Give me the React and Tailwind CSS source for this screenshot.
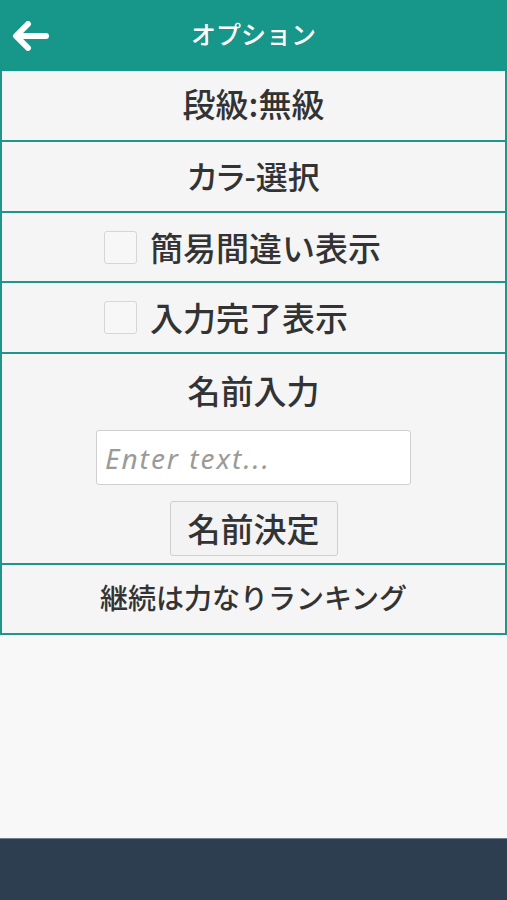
import React, { useState } from "react";

const jp = { fontFamily: '"Noto Sans CJK JP", "Noto Sans", sans-serif' };

function Row({ children, className = "" }) {
  return (
    <div className={`flex items-center justify-center border-b-2 border-[#1f9689] bg-[#f5f5f5] ${className}`}>
      {children}
    </div>
  );
}

function Check({ checked, onClick, label }) {
  return (
    <button onClick={onClick} className="flex items-center gap-[13px]">
      <span className="flex h-[33px] w-[33px] items-center justify-center rounded-[3px] border border-[#d6d6d6] bg-[#f7f7f7] text-[20px] text-[#333]">
        {checked ? "✓" : ""}
      </span>
      <span className="text-[33px] font-medium leading-none text-[#333]">{label}</span>
    </button>
  );
}

export default function App() {
  const [mistake, setMistake] = useState(false);
  const [done, setDone] = useState(false);
  const [name, setName] = useState("");

  return (
    <div className="flex h-[900px] w-full flex-col bg-[#f8f8f8]" style={jp}>
      {/* header */}
      <div className="relative flex h-[71px] shrink-0 items-center justify-center bg-[#17968a]">
        <button className="absolute left-[11px] top-[21px]">
          <svg width="38" height="30" viewBox="0 0 38 30">
            <path d="M17 3 L5 15 L17 27 M6 15 H35" fill="none" stroke="#fff" strokeWidth="6" strokeLinecap="round" strokeLinejoin="round" />
          </svg>
        </button>
        <span className="-mt-[3px] text-[25px] font-medium text-white">オプション</span>
      </div>

      {/* options */}
      <div className="flex flex-col border-x-2 border-[#1f9689]">
        <Row className="h-[71px] border-t border-t-[#e8f4f2]">
          <span className="-mt-[4px] text-[33px] font-medium text-[#333]">段級:無級</span>
        </Row>
        <Row className="h-[71px]">
          <span className="-mt-[4px] text-[32px] font-medium text-[#333]" style={{ fontFeatureSettings: '"palt"' }}>
            カラ-選択
          </span>
        </Row>
        <Row className="h-[70px] justify-start pl-[102px]">
          <Check checked={mistake} onClick={() => setMistake(!mistake)} label="簡易間違い表示" />
        </Row>
        <Row className="h-[71px] justify-start pl-[102px]">
          <Check checked={done} onClick={() => setDone(!done)} label="入力完了表示" />
        </Row>
        <Row className="h-[211px] flex-col justify-start pt-[20px]">
          <span className="text-[33px] font-medium leading-none text-[#333]">名前入力</span>
          <input
            value={name}
            onChange={(e) => setName(e.target.value)}
            placeholder="Enter text..."
            className="mt-[23px] h-[55px] w-[315px] rounded-[3px] border border-[#cfcfcf] bg-white px-[8px] text-[28px] italic tracking-[2px] text-[#333] outline-none placeholder:text-[#9a9a9a]"
            style={{ fontFamily: '"Noto Sans", "Open Sans", sans-serif' }}
          />
          <button className="mt-[16px] flex h-[55px] w-[168px] items-center justify-center rounded-[3px] border border-[#cfcfcf] bg-[#f3f3f3] text-[33px] font-medium text-[#333]">
            名前決定
          </button>
        </Row>
        <Row className="h-[70px]">
          <span className="-mt-[4px] text-[28px] font-medium text-[#333]">継続は力なりランキング</span>
        </Row>
      </div>

      <div className="flex-1" />

      {/* footer */}
      <div className="h-[62px] shrink-0 border-t border-[#6f7d8c] bg-[#2c3e50]" />
    </div>
  );
}
